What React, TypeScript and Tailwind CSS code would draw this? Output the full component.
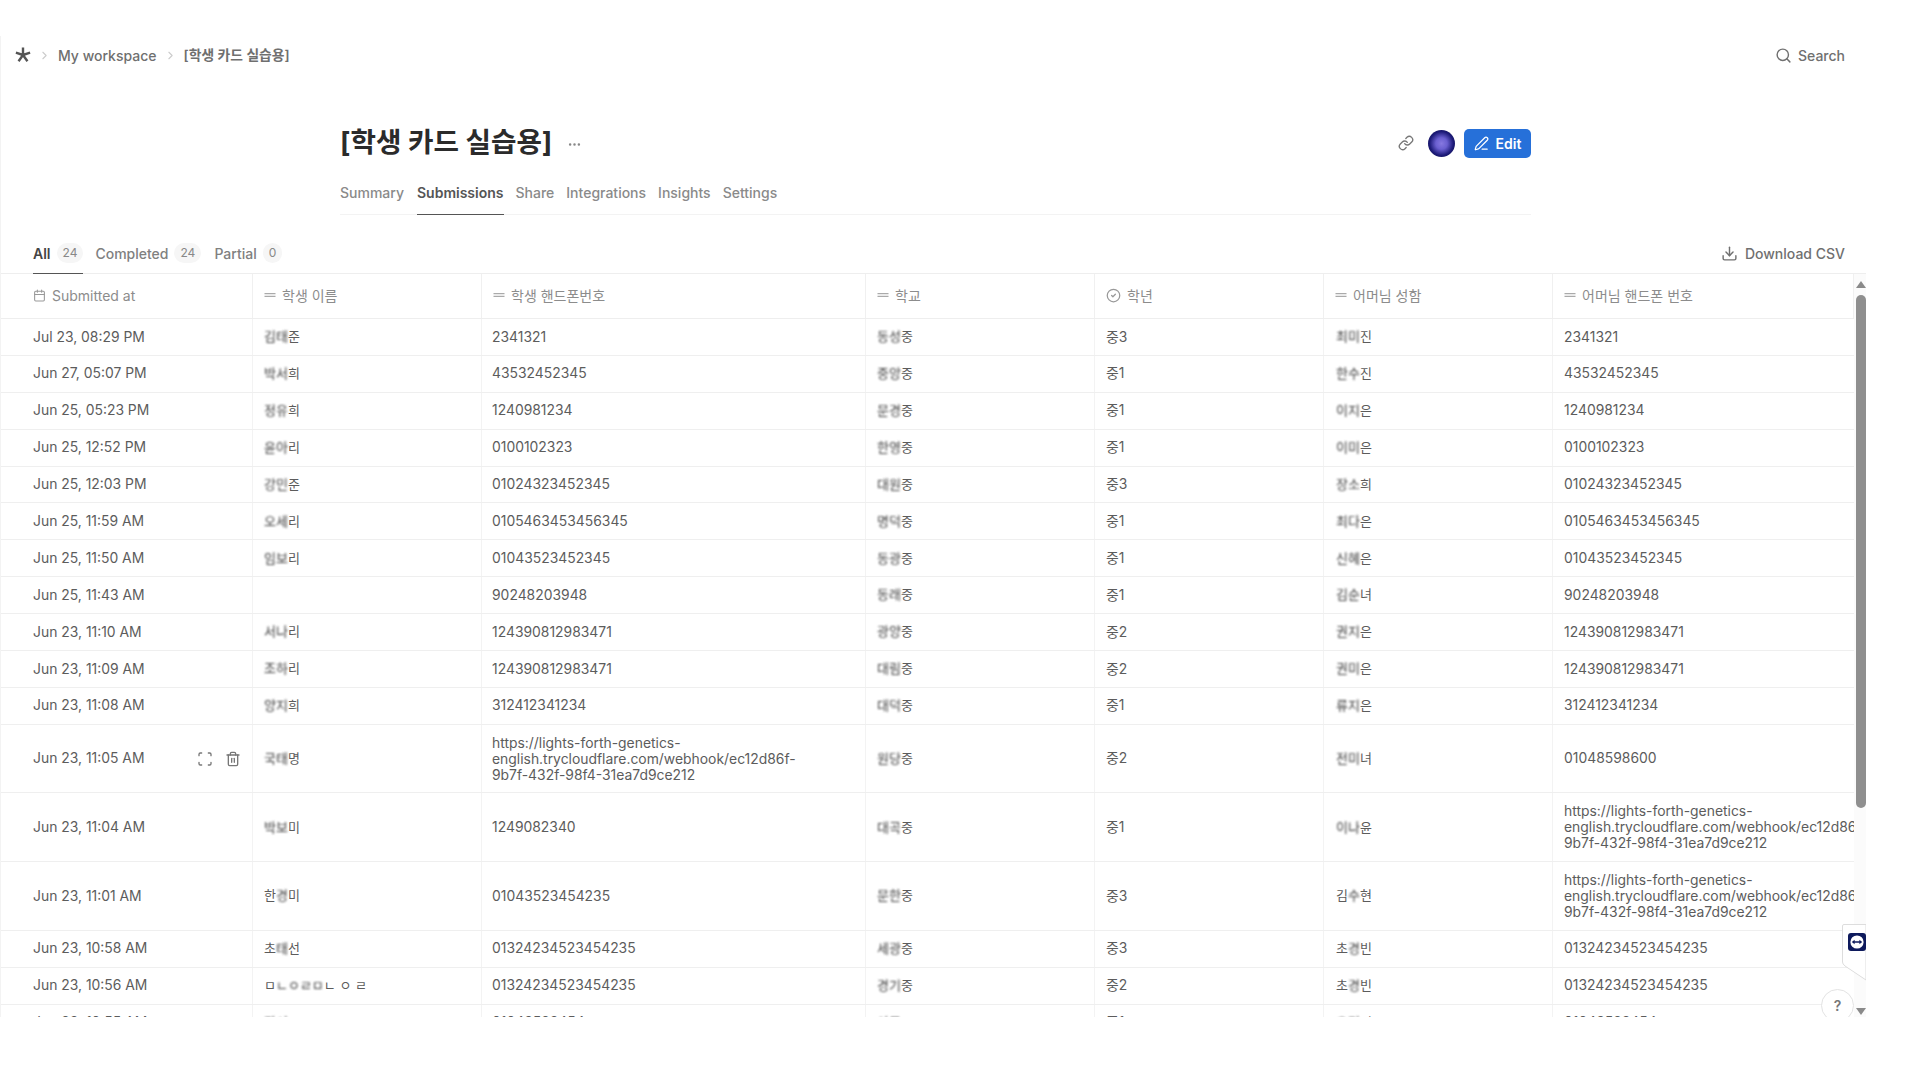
import { Calendar, ChevronRight, CircleCheck, Download, Ellipsis, Link, PenLine, Scan, Search, Trash2 } from 'lucide-react'

const URL_LINES = ['https://lights-forth-genetics-', 'english.trycloudflare.com/webhook/ec12d86f-', '9b7f-432f-98f4-31ea7d9ce212']
const GRID = 'grid grid-cols-[252px_229px_384px_229px_229px_229px_301px]'

type Masked = [string, string, string]

const ROWS: { at: string; name: Masked; phone: string; school: Masked; grade: string; mom: Masked; momPhone: string; tall?: boolean; hover?: boolean }[] = [
  { at: 'Jul 23, 08:29 PM', name: ['', '김태', '준'], phone: '2341321', school: ['', '동성', '중'], grade: '중3', mom: ['', '최미', '진'], momPhone: '2341321' },
  { at: 'Jun 27, 05:07 PM', name: ['', '박서', '희'], phone: '43532452345', school: ['', '중앙', '중'], grade: '중1', mom: ['', '한수', '진'], momPhone: '43532452345' },
  { at: 'Jun 25, 05:23 PM', name: ['', '정유', '희'], phone: '1240981234', school: ['', '문경', '중'], grade: '중1', mom: ['', '이지', '은'], momPhone: '1240981234' },
  { at: 'Jun 25, 12:52 PM', name: ['', '윤아', '리'], phone: '0100102323', school: ['', '한영', '중'], grade: '중1', mom: ['', '이미', '은'], momPhone: '0100102323' },
  { at: 'Jun 25, 12:03 PM', name: ['', '강민', '준'], phone: '01024323452345', school: ['', '대원', '중'], grade: '중3', mom: ['', '장소', '희'], momPhone: '01024323452345' },
  { at: 'Jun 25, 11:59 AM', name: ['', '오세', '리'], phone: '0105463453456345', school: ['', '명덕', '중'], grade: '중1', mom: ['', '최다', '은'], momPhone: '0105463453456345' },
  { at: 'Jun 25, 11:50 AM', name: ['', '임보', '리'], phone: '01043523452345', school: ['', '동광', '중'], grade: '중1', mom: ['', '신혜', '은'], momPhone: '01043523452345' },
  { at: 'Jun 25, 11:43 AM', name: ['', '　　', ''], phone: '90248203948', school: ['', '동래', '중'], grade: '중1', mom: ['', '김순', '녀'], momPhone: '90248203948' },
  { at: 'Jun 23, 11:10 AM', name: ['', '서나', '리'], phone: '124390812983471', school: ['', '광양', '중'], grade: '중2', mom: ['', '권지', '은'], momPhone: '124390812983471' },
  { at: 'Jun 23, 11:09 AM', name: ['', '조하', '리'], phone: '124390812983471', school: ['', '대림', '중'], grade: '중2', mom: ['', '권미', '은'], momPhone: '124390812983471' },
  { at: 'Jun 23, 11:08 AM', name: ['', '양지', '희'], phone: '312412341234', school: ['', '대덕', '중'], grade: '중1', mom: ['', '류지', '은'], momPhone: '312412341234' },
  { at: 'Jun 23, 11:05 AM', name: ['', '국태', '명'], phone: 'url', school: ['', '원당', '중'], grade: '중2', mom: ['', '전미', '녀'], momPhone: '01048598600', tall: true, hover: true },
  { at: 'Jun 23, 11:04 AM', name: ['', '박보', '미'], phone: '1249082340', school: ['', '대곡', '중'], grade: '중1', mom: ['', '이나', '윤'], momPhone: 'url', tall: true },
  { at: 'Jun 23, 11:01 AM', name: ['한', '경', '미'], phone: '01043523454235', school: ['', '문한', '중'], grade: '중3', mom: ['김', '수', '현'], momPhone: 'url', tall: true },
  { at: 'Jun 23, 10:58 AM', name: ['초', '태', '선'], phone: '01324234523454235', school: ['', '세광', '중'], grade: '중3', mom: ['초', '경', '빈'], momPhone: '01324234523454235' },
  { at: 'Jun 23, 10:56 AM', name: ['ㅁ', 'ㄴㅇㄹㅁ', 'ㄴ ㅇ ㄹ'], phone: '01324234523454235', school: ['', '경기', '중'], grade: '중2', mom: ['초', '경', '빈'], momPhone: '01324234523454235' },
  { at: 'Jun 23, 10:55 AM', name: ['', '장서', '윤'], phone: '01043523454', school: ['', '상무', '중'], grade: '중1', mom: ['', '오미', '경'], momPhone: '01043523454' },
]

function Mask({ value }: { value: Masked }) {
  return (
    <span className="text-[13px] text-[#5c5c5c]">
      {value[0]}
      <span className="inline-block blur-[1px] contrast-[1.8]">{value[1]}</span>
      {value[2]}
    </span>
  )
}

function Maybe({ value }: { value: string }) {
  if (value !== 'url') return <span className="whitespace-nowrap">{value}</span>
  return (
    <div className="leading-[16px] whitespace-nowrap overflow-hidden">
      {URL_LINES.map(l => <div key={l}>{l}</div>)}
    </div>
  )
}

function EqualMark() {
  return (
    <svg width="12" height="12" viewBox="0 0 12 12" className="shrink-0 text-[#aaa]">
      <path d="M0.5 4.6h11M0.5 7.4h11" stroke="currentColor" strokeWidth="1.3" />
    </svg>
  )
}

function Head({ label, icon, first }: { label: string; icon: React.ReactNode; first?: boolean }) {
  return (
    <div className={`flex items-center gap-[6px] border-r border-[#f0f0f0] pb-[2px] text-[14px] text-[#8c8c8c] ${first ? 'pl-[32px]' : 'pl-[11px]'}`}>
      {icon}
      <span>{label}</span>
    </div>
  )
}

function Count({ n }: { n: number }) {
  return <span className="ml-[6px] flex h-[20px] items-center justify-center rounded-full bg-[#f6f6f6] px-[6px] text-[12px] font-normal text-[#888]">{n}</span>
}

export default function App() {
  return (
    <div className="h-[1080px] w-full overflow-hidden bg-white" style={{ fontFamily: 'Inter, "Noto Sans CJK KR", sans-serif' }}>
      <div className="relative mr-[54px] mt-[36px] h-[981px] overflow-hidden border-l border-[#f3f3f3]">
        {/* top bar */}
        <div className="flex h-[38px] items-center justify-between pl-[14px] pr-[21px]">
          <div className="flex items-center gap-[7px] text-[14px] font-medium text-[#6f6f6f]">
            <svg width="16" height="16" viewBox="0 0 18 18" className="text-[#555]">
              <path d="M9 9V0.5M9 9l8-2.6M9 9l5 7M9 9l-5 7M9 9 1 6.4" stroke="currentColor" strokeWidth="2.7" />
            </svg>
            <ChevronRight size={13} className="text-[#ccc]" />
            <span>My workspace</span>
            <ChevronRight size={13} className="text-[#ccc]" />
            <span className="text-[13.8px] font-semibold">[학생 카드 실습용]</span>
          </div>
          <div className="flex items-center gap-[6px] text-[14px] font-medium text-[#707070]">
            <Search size={17} />
            <span>Search</span>
          </div>
        </div>

        {/* form title + tabs */}
        <div className="ml-[339px] mt-[51px] w-[1191px]">
          <div className="flex h-[36px] items-center">
            <h1 className="text-[27.7px] font-bold text-[#2b2b2b]">[학생 카드 실습용]</h1>
            <Ellipsis size={15} className="ml-[15px] mt-[2px] text-[#888]" />
            <div className="ml-auto flex items-center">
              <Link size={16} className="text-[#777]" />
              <div className="ml-[14px] h-[27px] w-[27px] rounded-full bg-[radial-gradient(circle,#8678e0_0%,#6a5fd0_30%,#1c1a78_62%,#14144a_92%,#777_100%)]" />
              <button className="ml-[9px] flex h-[29px] w-[67px] items-center justify-center gap-[7px] rounded-[5px] bg-[#2670d9] text-[14px] font-semibold text-white">
                <PenLine size={15} />
                Edit
              </button>
            </div>
          </div>
          <div className="mt-[10px] flex h-[44px] gap-[12px] border-b border-[#f3f3f3] text-[14px] font-medium text-[#8a8a8a]">
            <span className="mr-[1px] flex items-center">Summary</span>
            <span className="-mb-px flex items-center border-b-[1.5px] border-[#555] font-semibold text-[#555]">Submissions</span>
            <span className="flex items-center">Share</span>
            <span className="flex items-center">Integrations</span>
            <span className="flex items-center">Insights</span>
            <span className="flex items-center">Settings</span>
          </div>
        </div>

        {/* filters */}
        <div className="mt-[18px] flex h-[40px] items-stretch justify-between pl-[32px] pr-[21px] text-[14px] font-medium text-[#808080]">
          <div className="flex items-center">
            <span className="-mb-px flex h-[41px] items-center border-b-[1.5px] border-[#555]">
              <span className="font-semibold text-[#444]">All</span>
              <Count n={24} />
            </span>
            <span className="ml-[12px]">Completed</span>
            <Count n={24} />
            <span className="ml-[13px]">Partial</span>
            <Count n={0} />
          </div>
          <div className="flex items-center gap-[7px] text-[#707070]">
            <Download size={17} />
            Download CSV
          </div>
        </div>

        {/* table */}
        <div className="flex h-[744px] overflow-hidden border-t border-[#eee]">
          <div className="w-[1853px] shrink-0 overflow-hidden">
            <div className={`${GRID} h-[45px] border-b border-[#eee]`}>
              <Head first label="Submitted at" icon={<Calendar size={13} className="text-[#999]" />} />
              <Head label="학생 이름" icon={<EqualMark />} />
              <Head label="학생 핸드폰번호" icon={<EqualMark />} />
              <Head label="학교" icon={<EqualMark />} />
              <Head label="학년" icon={<CircleCheck size={15} className="text-[#999]" />} />
              <Head label="어머님 성함" icon={<EqualMark />} />
              <Head label="어머님 핸드폰 번호" icon={<EqualMark />} />
            </div>
            {ROWS.map(r => (
              <div key={r.at} className={`${GRID} ${r.tall ? 'h-[68.7px]' : 'h-[36.9px]'} border-b border-[#efefef] text-[13.9px] text-[#5c5c5c]`}>
                <div className="flex items-center justify-between border-r border-[#f3f3f3] pl-[32px] pr-[11px]">
                  <span>{r.at}</span>
                  {r.hover && (
                    <span className="flex items-center gap-[12px] text-[#777]">
                      <Scan size={16} />
                      <Trash2 size={16} />
                    </span>
                  )}
                </div>
                <div className="flex items-center border-r border-[#f3f3f3] pl-[11px]"><Mask value={r.name} /></div>
                <div className="flex items-center border-r border-[#f3f3f3] pl-[10px]"><Maybe value={r.phone} /></div>
                <div className="flex items-center border-r border-[#f3f3f3] pl-[11px]"><Mask value={r.school} /></div>
                <div className="flex items-center border-r border-[#f3f3f3] pl-[11px]">{r.grade}</div>
                <div className="flex items-center border-r border-[#f3f3f3] pl-[12px]"><Mask value={r.mom} /></div>
                <div className="flex items-center overflow-hidden pl-[11px]"><Maybe value={r.momPhone} /></div>
              </div>
            ))}
          </div>

          {/* scrollbar */}
          <div className="flex w-[12px] shrink-0 flex-col items-end bg-[#fbfbfb]">
            <svg width="10" height="7" viewBox="0 0 10 7" className="mt-[7px] text-[#8a8a8a]"><path d="M5 0 10 7H0Z" fill="currentColor" /></svg>
            <div className="mt-[7px] h-[513px] w-[10px] rounded-full bg-[#8f8f8f]" />
            <svg width="10" height="7" viewBox="0 0 10 7" className="mt-auto mb-[2px] text-[#8a8a8a]"><path d="M5 7 0 0h10Z" fill="currentColor" /></svg>
          </div>
        </div>

        {/* teamviewer tab */}
        <div className="absolute right-0 top-[888px] h-[57px] w-[24px]">
          <svg width="24" height="57" viewBox="0 0 24 57" className="absolute inset-0">
            <path d="M24 0.5H2Q0.5 0.5 0.5 2V38Q0.5 40 3 42L24 56V0Z" fill="#fff" stroke="#ddd" />
          </svg>
          <svg width="18" height="18" viewBox="0 0 18 18" className="absolute left-[6px] top-[9px]">
            <rect width="18" height="18" rx="3" fill="#0e1a5c" />
            <circle cx="9" cy="9" r="6.6" fill="#fff" />
            <path d="M3.8 9 6.6 6.8v1.4h4.8V6.8L14.2 9l-2.8 2.2V9.8H6.6v1.4Z" fill="#0e1a5c" />
          </svg>
        </div>

        {/* help */}
        <div className="absolute bottom-[-5px] right-[12px] flex h-[33px] w-[33px] items-center justify-center rounded-full border border-[#e3e3e3] bg-white text-[14px] font-semibold text-[#777]">?</div>
      </div>
    </div>
  )
}
